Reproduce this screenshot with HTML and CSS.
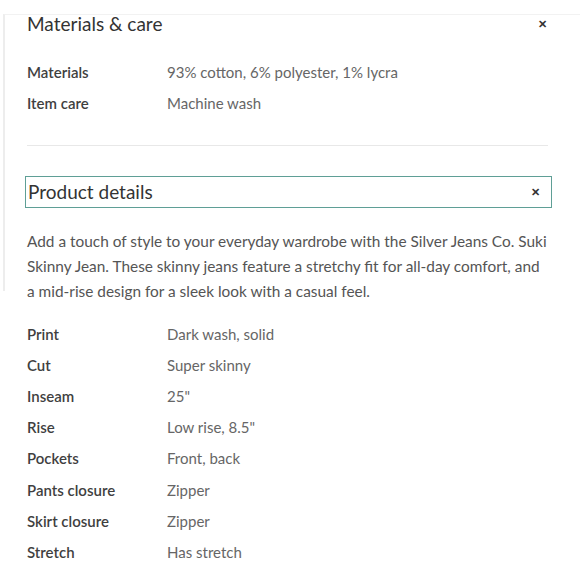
FILE: index.html
```html
<!DOCTYPE html>
<html>
<head>
<meta charset="utf-8">
<link rel="stylesheet" href="styles.css">
</head>
<body>
<div class="panel">
  <section class="care">
    <div class="care-head">
      <h2 class="title">Materials &amp; care</h2>
      <span class="close">&#x2715;</span>
    </div>
    <dl class="specs care-specs">
      <div class="row"><dt>Materials</dt><dd>93% cotton, 6% polyester, 1% lycra</dd></div>
      <div class="row"><dt>Item care</dt><dd>Machine wash</dd></div>
    </dl>
  </section>
  <hr class="divider">
  <section class="details">
    <div class="details-head">
      <h2 class="title small">Product details</h2>
      <span class="close">&#x2715;</span>
    </div>
    <p class="desc">Add a touch of style to your everyday wardrobe with the Silver Jeans Co. Suki Skinny Jean. These skinny jeans feature a stretchy fit for all-day comfort, and a mid-rise design for a sleek look with a casual feel.</p>
  </section>
</div>
<dl class="specs detail-specs">
  <div class="row"><dt>Print</dt><dd>Dark wash, solid</dd></div>
  <div class="row"><dt>Cut</dt><dd>Super skinny</dd></div>
  <div class="row"><dt>Inseam</dt><dd>25"</dd></div>
  <div class="row"><dt>Rise</dt><dd>Low rise, 8.5"</dd></div>
  <div class="row"><dt>Pockets</dt><dd>Front, back</dd></div>
  <div class="row"><dt>Pants closure</dt><dd>Zipper</dd></div>
  <div class="row"><dt>Skirt closure</dt><dd>Zipper</dd></div>
  <div class="row"><dt>Stretch</dt><dd>Has stretch</dd></div>
</dl>
</body>
</html>
```
FILE: styles.css
```css
html, body {
  margin: 0;
  padding: 0;
  background: #fff;
}
body {
  font-family: Lato, "Open Sans", sans-serif;
  color: #444;
  width: 580px;
  height: 580px;
  overflow: hidden;
}
.panel {
  margin-top: 14px;
  margin-left: 3px;
  border-top: 1px solid #f2f2f2;
  border-left: 2px solid #ededed;
  padding: 0 30px 0 22px;
  height: 276px;
}
.care-head {
  display: flex;
  justify-content: space-between;
  align-items: center;
  height: 18px;
}
.title {
  margin: 0;
  font-size: 19px;
  font-weight: 400;
  color: #333;
  line-height: 18px;
}
.close {
  font-size: 11px;
  color: #333;
  font-weight: 700;
  margin-right: 3px;
}
.specs {
  margin: 0;
}
.row {
  display: flex;
  height: 31.2px;
  align-items: center;
}
dt {
  width: 140px;
  font-size: 15px;
  font-weight: 600;
  color: #3f3f3f;
}
dd {
  margin: 0;
  font-size: 15px;
  color: #666;
}
.care-specs {
  margin-top: 23px;
}
.divider {
  border: 0;
  border-top: 1px solid #e8e8e8;
  margin: 27px 2px 0 0;
}
.details-head {
  margin-top: 30px;
  margin-left: -2px;
  margin-right: -2px;
  height: 30px;
  border: 1px solid #5f9f96;
  display: flex;
  justify-content: space-between;
  align-items: center;
  padding: 0 8px 0 2px;
}
.title.small {
  font-size: 19px;
}
.desc {
  margin: 21px 0 0 0;
  font-size: 15.4px;
  line-height: 25px;
  color: #555;
}
.detail-specs {
  margin: 27px 0 0 27px;
}
```
